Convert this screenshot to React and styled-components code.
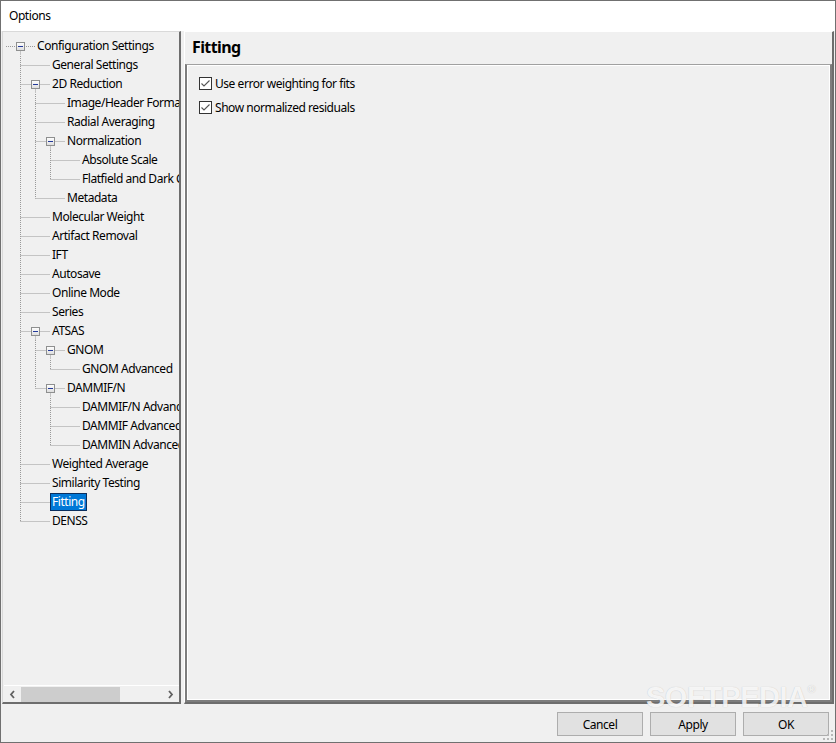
import React from "react";
import styled, { createGlobalStyle } from "styled-components";

const GlobalStyle = createGlobalStyle`
  html, body { margin: 0; padding: 0; background: #f0f0f0; }
  body {
    font-family: "Noto Sans", "Liberation Sans", sans-serif;
    font-size: 12px;
    letter-spacing: -0.45px;
    color: #000;
  }
`;

const tree = {
  label: "Configuration Settings",
  children: [
    { label: "General Settings" },
    {
      label: "2D Reduction",
      children: [
        { label: "Image/Header Format" },
        { label: "Radial Averaging" },
        {
          label: "Normalization",
          children: [
            { label: "Absolute Scale" },
            { label: "Flatfield and Dark Correction" },
          ],
        },
        { label: "Metadata" },
      ],
    },
    { label: "Molecular Weight" },
    { label: "Artifact Removal" },
    { label: "IFT" },
    { label: "Autosave" },
    { label: "Online Mode" },
    { label: "Series" },
    {
      label: "ATSAS",
      children: [
        { label: "GNOM", children: [{ label: "GNOM Advanced" }] },
        {
          label: "DAMMIF/N",
          children: [
            { label: "DAMMIF/N Advanced" },
            { label: "DAMMIF Advanced" },
            { label: "DAMMIN Advanced" },
          ],
        },
      ],
    },
    { label: "Weighted Average" },
    { label: "Similarity Testing" },
    { label: "Fitting", selected: true },
    { label: "DENSS" },
  ],
};

// flatten the tree into rows, remembering which guide lines run through each row
const flatten = (node, level = 0, guides = [], last = true, out = []) => {
  out.push({ ...node, level, guides, last, index: out.length });
  const kids = node.children || [];
  kids.forEach((child, i) => {
    const nextGuides = level === 0 ? [] : [...guides, !last];
    flatten(child, level + 1, nextGuides, i === kids.length - 1, out);
  });
  return out;
};

const rows = flatten(tree);

const ROW_H = 19;
const lineColor = "#999999";

const TreeLines = ({ row }) => {
  const { level, guides, last, children, index } = row;
  const width = 32 + 15 * level;
  const mid = 10.5;
  const off = index % 2;
  const gx = (d) => 17 + 15 * d + 0.5; // svg x of the guide for depth d
  const dash = { stroke: lineColor, strokeWidth: 1, strokeDasharray: "1 1" };

  return (
    <svg width={width} height={ROW_H} style={{ flexShrink: 0 }}>
      {guides.map((on, d) =>
        on ? (
          <line key={d} x1={gx(d)} x2={gx(d)} y1={0} y2={ROW_H} {...dash} strokeDashoffset={off} />
        ) : null
      )}
      {level > 0 && (
        <line
          x1={gx(level - 1)}
          x2={gx(level - 1)}
          y1={0}
          y2={last ? mid : ROW_H}
          {...dash}
          strokeDashoffset={off}
        />
      )}
      <line
        x1={level === 0 ? 3 : gx(level - 1)}
        x2={width}
        y1={mid}
        y2={mid}
        {...dash}
      />
      {children && (
        <>
          <line x1={gx(level)} x2={gx(level)} y1={mid} y2={ROW_H} {...dash} strokeDashoffset={off} />
          <defs>
            <linearGradient id={`bx${index}`} x1="0" y1="0" x2="0" y2="1">
              <stop offset="0" stopColor="#ffffff" />
              <stop offset="1" stopColor="#dcdcdc" />
            </linearGradient>
          </defs>
          <rect
            x={gx(level) - 4}
            y={mid - 4}
            width={8}
            height={8}
            fill={`url(#bx${index})`}
            stroke="#8e8f8f"
          />
          <line x1={gx(level) - 2.5} x2={gx(level) + 2.5} y1={mid} y2={mid} stroke="#23399a" />
        </>
      )}
    </svg>
  );
};

const Chevron = ({ dir }) => (
  <svg width="7" height="9" viewBox="0 0 7 9">
    <path
      d={dir === "left" ? "M5 1 L2 4.5 L5 8" : "M2 1 L5 4.5 L2 8"}
      fill="none"
      stroke="#606060"
      strokeWidth="1.8"
    />
  </svg>
);

const Check = () => (
  <CheckBox>
    <svg width="11" height="11" viewBox="0 0 11 11">
      <path d="M1.5 5.5 L4 8 L9.5 2.5" fill="none" stroke="#555" strokeWidth="1.1" />
    </svg>
  </CheckBox>
);

const Grip = () => (
  <GripMark width="11" height="11" viewBox="0 0 11 11">
    {[
      [8, 0],
      [8, 4],
      [4, 4],
      [8, 8],
      [4, 8],
      [0, 8],
    ].map(([x, y]) => (
      <rect key={`${x}${y}`} x={x} y={y} width="2" height="2" fill="#b8b8b8" />
    ))}
  </GripMark>
);

const App = () => {
  return (
    <>
      <GlobalStyle />
      <Window>
        <TitleBar>Options</TitleBar>
        <Main>
          <TreePane>
            <TreeBody>
              {rows.map((row) => (
                <Row key={row.index}>
                  <TreeLines row={row} />
                  <Label selected={row.selected}>{row.label}</Label>
                </Row>
              ))}
            </TreeBody>
            <ScrollBar>
              <ArrowBtn>
                <Chevron dir="left" />
              </ArrowBtn>
              <Track>
                <Thumb />
              </Track>
              <ArrowBtn>
                <Chevron dir="right" />
              </ArrowBtn>
            </ScrollBar>
          </TreePane>
          <Panel>
            <PanelTitle>Fitting</PanelTitle>
            <PanelBox>
              <Option>
                <Check />
                Use error weighting for fits
              </Option>
              <Option>
                <Check />
                Show normalized residuals
              </Option>
            </PanelBox>
          </Panel>
        </Main>
        <Footer>
          <Button>Cancel</Button>
          <Button>Apply</Button>
          <Button>OK</Button>
        </Footer>
        <Watermark>
          SOFTPEDIA<sup>®</sup>
        </Watermark>
        <Grip />
      </Window>
    </>
  );
};

export default App;

const Window = styled.div`
  position: relative;
  width: 836px;
  height: 743px;
  box-sizing: border-box;
  border: 1px solid #707070;
  display: flex;
  flex-direction: column;
  background: #f0f0f0;
  overflow: hidden;
`;

const TitleBar = styled.div`
  height: 30px;
  line-height: 30px;
  padding-left: 8px;
  background: #ffffff;
  flex-shrink: 0;
`;

const Main = styled.div`
  display: flex;
  height: 673px;
  padding-left: 1px;
  gap: 3px;
  flex-shrink: 0;
`;

const TreePane = styled.div`
  width: 179px;
  box-sizing: border-box;
  border-top: 1px solid #d9d9d9;
  border-left: 1px solid #d9d9d9;
  border-right: 2px solid #6d6d6d;
  border-bottom: 2px solid #6d6d6d;
  display: flex;
  flex-direction: column;
  overflow: hidden;
`;

const TreeBody = styled.div`
  flex: 1;
  padding-top: 4px;
  overflow: hidden;
`;

const Row = styled.div`
  display: flex;
  align-items: center;
  height: ${ROW_H}px;
  white-space: nowrap;
`;

const Label = styled.span`
  height: 16px;
  line-height: 16px;
  padding: 0 1px;
  border: 1px solid ${(p) => (p.selected ? "#0b2f5e" : "transparent")};
  background: ${(p) => (p.selected ? "#0078d7" : "transparent")};
  color: ${(p) => (p.selected ? "#ffffff" : "#000000")};
`;

const ScrollBar = styled.div`
  display: flex;
  align-items: center;
  height: 16px;
  margin-left: 1px;
  border-top: 1px solid #ffffff;
  flex-shrink: 0;
`;

const ArrowBtn = styled.div`
  width: 17px;
  height: 16px;
  display: flex;
  align-items: center;
  justify-content: center;
`;

const Track = styled.div`
  flex: 1;
  height: 15px;
  display: flex;
`;

const Thumb = styled.div`
  width: 99px;
  height: 15px;
  background: #cdcdcd;
`;

const Panel = styled.div`
  width: 650px;
  box-sizing: border-box;
  border-top: 1px solid #ffffff;
  border-left: 1px solid #ffffff;
  border-right: 2px solid #6d6d6d;
  border-bottom: 2px solid #6d6d6d;
  display: flex;
  flex-direction: column;
`;

const PanelTitle = styled.div`
  height: 32px;
  line-height: 30px;
  padding-left: 7px;
  font-size: 16px;
  font-weight: bold;
  letter-spacing: -0.6px;
  flex-shrink: 0;
`;

const PanelBox = styled.div`
  flex: 1;
  border-top: 1px solid #a0a0a0;
  border-left: 2px solid #7d7d7d;
  border-right: 2px solid #7d7d7d;
  border-bottom: 2px solid #7d7d7d;
  box-shadow: inset 1px 1px 0 #ffffff, inset -1px -1px 0 #ffffff;
  padding: 12px 0 0 12px;
  display: flex;
  flex-direction: column;
  gap: 11px;
`;

const Option = styled.label`
  display: flex;
  align-items: center;
  gap: 3px;
  height: 13px;
`;

const CheckBox = styled.span`
  width: 13px;
  height: 13px;
  box-sizing: border-box;
  border: 1px solid #333333;
  background: #ffffff;
  display: flex;
  align-items: center;
  justify-content: center;
`;

const Footer = styled.div`
  flex: 1;
  display: flex;
  justify-content: flex-end;
  align-items: flex-start;
  gap: 7px;
  padding: 8px 6px 0 0;
`;

const Button = styled.button`
  width: 86px;
  height: 24px;
  box-sizing: border-box;
  border: 1px solid #adadad;
  background: #e1e1e1;
  font-family: inherit;
  font-size: 12px;
  letter-spacing: -0.45px;
  color: #000;
  padding: 0;
`;

const Watermark = styled.div`
  position: absolute;
  left: 645px;
  top: 680px;
  font-family: "Liberation Sans", sans-serif;
  font-weight: bold;
  font-size: 29px;
  letter-spacing: -0.5px;
  color: rgba(255, 255, 255, 0.85);
  text-shadow: 0 0 1px rgba(0, 0, 0, 0.22);
  pointer-events: none;

  sup {
    font-size: 11px;
    vertical-align: top;
    position: relative;
    top: 2px;
  }
`;

const GripMark = styled.svg`
  position: absolute;
  right: 1px;
  bottom: 1px;
`;
